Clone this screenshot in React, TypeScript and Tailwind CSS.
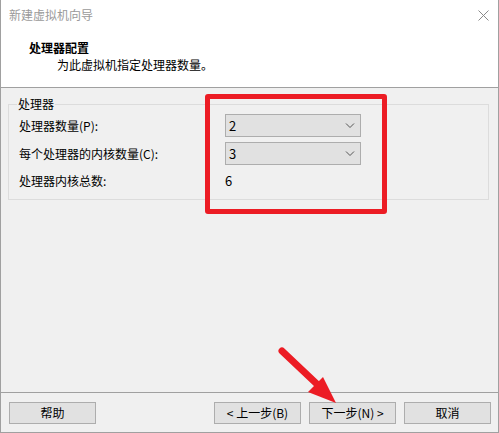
const FONT = "font-['Microsoft_YaHei','Noto_Sans_CJK_SC','Liberation_Sans',sans-serif]"

const Chevron = () => (
  <svg width="10" height="6" viewBox="0 0 10 6" className="shrink-0">
    <path d="M1 0.5 L5 4.5 L9 0.5" fill="none" stroke="#555" strokeWidth="1" />
  </svg>
)

const Combo = ({ value }: { value: string }) => (
  <div className="flex items-center justify-between w-[136px] h-[23px] bg-[#e1e1e1] border border-[#adadad] pl-[3px] pr-[5px] text-[13px] text-black">
    <span>{value}</span>
    <Chevron />
  </div>
)

const Btn = ({ label }: { label: string }) => (
  <button className="w-[87px] h-[22px] bg-[#e1e1e1] border border-[#adadad] text-[12px] text-black leading-none">
    {label}
  </button>
)

export default function App() {
  return (
    <div className={`relative w-[499px] h-[433px] flex flex-col bg-[#f0f0f0] border-x border-b border-[#a0a0a0] ${FONT}`}>
      {/* header */}
      <div className="h-[88px] bg-white border-b border-[#a0a0a0] shrink-0">
        <div className="flex items-center justify-between pl-[8px] pr-[9px] pt-[7px] h-[23px]">
          <span className="text-[12px] leading-[16px] text-[#9a9a9a]">新建虚拟机向导</span>
          <svg width="11" height="11" viewBox="0 0 11 11">
            <path d="M0.5 0.5 L10.5 10.5 M10.5 0.5 L0.5 10.5" stroke="#8a8a8a" strokeWidth="1" />
          </svg>
        </div>
        <div className="pl-[28px] pt-[17px] text-[12px] leading-[16px] font-bold text-black">处理器配置</div>
        <div className="pl-[56px] pt-[1px] text-[12px] leading-[16px] text-black">为此虚拟机指定处理器数量。</div>
      </div>

      {/* body */}
      <div className="flex-1 pt-[8px]">
        <fieldset className="mx-[7px] w-[481px] border border-[#dcdcdc] pt-[2px] pb-[7px]">
          <legend className="ml-[8px] px-[1px] text-[12px] leading-[16px] text-black">处理器</legend>
          <div className="grid grid-cols-[206px_1fr] gap-y-[5px] items-center pl-[10px] text-[12px] text-black">
            <span>处理器数量(P):</span>
            <Combo value="2" />
            <span>每个处理器的内核数量(C):</span>
            <Combo value="3" />
            <span className="h-[22px] leading-[22px]">处理器内核总数:</span>
            <span className="text-[13px] leading-[22px]">6</span>
          </div>
        </fieldset>
      </div>

      {/* footer */}
      <div className="h-[40px] shrink-0 border-t border-[#a0a0a0] flex items-start pt-[9px] pl-[8px] pr-[7px]">
        <Btn label="帮助" />
        <div className="flex-1" />
        <div className="flex gap-[8px]">
          <Btn label="< 上一步(B)" />
          <Btn label="下一步(N) >" />
          <Btn label="取消" />
        </div>
      </div>

      {/* annotation: red highlight box */}
      <div className="absolute left-[204px] top-[94px] w-[182px] h-[120px] border-[5px] border-[#ec1c24] rounded-[3px] pointer-events-none" />

      {/* annotation: red arrow */}
      <svg className="absolute left-0 top-0 pointer-events-none" width="499" height="433" viewBox="0 0 499 433">
        <line x1="281" y1="351" x2="318" y2="386" stroke="#ec1c24" strokeWidth="7" strokeLinecap="round" />
        <polygon points="335,403 307,392 322,377" fill="#ec1c24" />
      </svg>
    </div>
  )
}
